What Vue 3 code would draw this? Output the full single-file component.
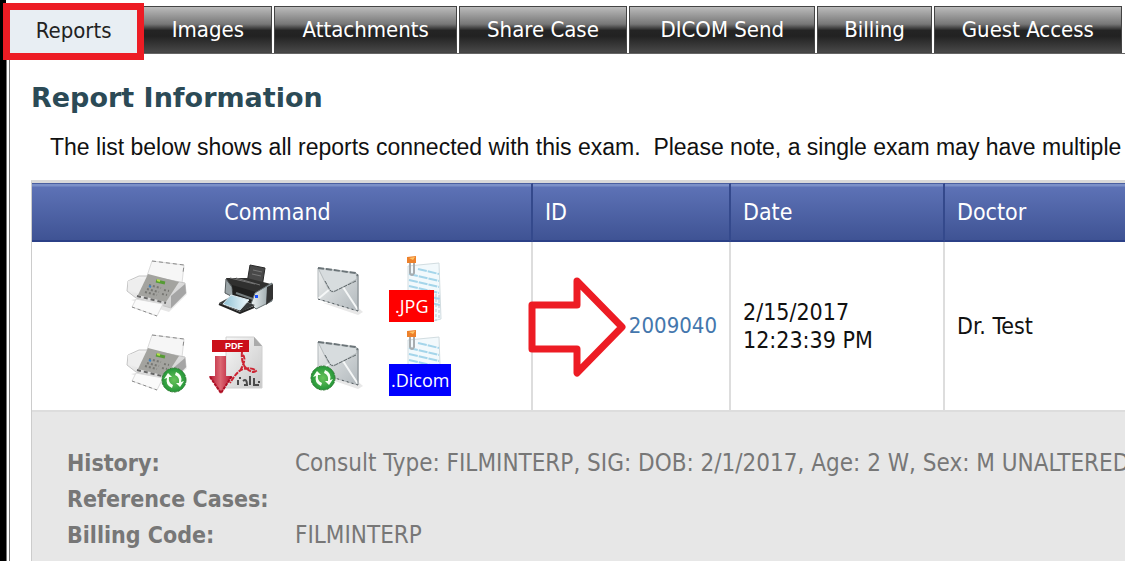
<template>
  <div class="page">
    <nav class="tabs">
      <button
        v-for="tab in tabs"
        :key="tab"
        type="button"
        class="tab"
        :class="{ active: tab === activeTab }"
        @click="activeTab = tab"
      >{{ tab }}</button>
    </nav>

    <main class="content">
      <h1>Report Information</h1>
      <p class="intro">The list below shows all reports connected with this exam.&nbsp; Please note, a single exam may have multiple</p>

      <table class="reports">
        <colgroup>
          <col class="col-command">
          <col class="col-id">
          <col class="col-date">
          <col>
        </colgroup>
        <thead>
          <tr>
            <th class="center">Command</th>
            <th>ID</th>
            <th>Date</th>
            <th>Doctor</th>
          </tr>
        </thead>
        <tbody>
          <tr v-for="report in reports" :key="report.id" class="report">
            <td class="commands-cell">
              <div class="commands">
                <button v-for="cmd in commands" :key="cmd.label" type="button" class="command" :aria-label="cmd.label">
                  <svg viewBox="0 0 64 66" width="64" height="66" aria-hidden="true">
                    <!-- fax -->
                    <g v-if="cmd.icon === 'fax'">
                      <path d="M6 44L44 56L62 38L59 33Z" fill="#e6e6e6" />
                      <path d="M27 5L59 9L57 27L22 20Z" fill="#f6f6f6" stroke="#dcdcdc" />
                      <path d="M27 5L59 9L58 17" fill="none" stroke="#8a8a8a" stroke-dasharray="4 3" />
                      <path d="M3 25L14 20L24 20L60 27L61 37L46 52L11 42L2 35Z" fill="url(#faxBody)" stroke="#c5c5c5" />
                      <path d="M46 40L60 28L61 37L46 52Z" fill="#a5a5a5" />
                      <path d="M3 25L14 22L22 25L14 38L3 34Z" fill="#eee" />
                      <path d="M23 18L54 26L41 46L13 39Z" fill="#a3a39f" />
                      <path d="M24 29L36 32M22 33L34 36M20 36L32 39M39 34L44 35M37 38L42 39" stroke="#777773" stroke-width="2" stroke-dasharray="2 2" />
                      <path d="M31 25L40 27" stroke="#569b35" stroke-width="3" />
                      <path d="M32 24L35 25" stroke="#b5e34a" stroke-width="2" />
                      <path d="M24 30L26 31" stroke="#4184c2" stroke-width="2" />
                      <path d="M12 40L41 47" stroke="#666" stroke-width="2" stroke-dasharray="4 3" />
                      <path d="M11 43L38 48L32 60L7 51Z" fill="#fafafa" stroke="#dcdcdc" />
                      <path d="M7 51L32 60" stroke="#8b8b8b" stroke-dasharray="3 3" />
                    </g>

                    <!-- printer -->
                    <g v-if="cmd.icon === 'printer'">
                      <path d="M37 9L52 12L49 31L34 27Z" fill="#494949" stroke="#292929" />
                      <path d="M40 14L49 16M39 18L48 20" stroke="#777" />
                      <path d="M13 22L34 22L58 28L45 37L16 32Z" fill="#30302f" />
                      <path d="M17 22L42 28M23 22L47 29" stroke="#747474" />
                      <path d="M13 23L19 31L20 41L12 37Z" fill="#9aa4a7" stroke="#53595b" />
                      <path d="M19 29L43 36L42 49L20 41Z" fill="#20201f" />
                      <path d="M23 37L40 43" stroke="#737b7c" stroke-width="2" />
                      <path d="M42 37L59 27L59 45L43 53L38 48Z" fill="url(#printerSide)" stroke="#697375" />
                      <path d="M54 31L60 28L60 43L53 49Z" fill="#333" />
                      <rect x="42" y="39" width="3" height="3" fill="#174fff" />
                      <path d="M6 47L17 41L42 49L28 56Z" fill="#373a3b" />
                      <path d="M18 39L36 44L27 54L10 48Z" fill="url(#photo)" stroke="#dceaf0" />
                      <path d="M6 48L27 57L41 51" stroke="#222" stroke-width="2" fill="none" />
                    </g>

                    <!-- envelope -->
                    <g v-if="cmd.icon === 'mail'">
                      <path d="M22 47L57 59L62 56L55 50Z" fill="#e8e8e8" />
                      <path d="M17 12L55 17L57 20L57 55L17 43Z" fill="url(#envelope)" stroke="#b2b8bb" />
                      <path d="M17 43L29 33M57 54L42 31" stroke="#f5f7f7" stroke-width="2" />
                      <path d="M17 12L55 17L56 23L35 35Q30 38 27 32Z" fill="#d7dcde" stroke="#b4babc" />
                      <path d="M17 12L55 17L57 20" stroke="#6b7478" stroke-width="2" stroke-dasharray="6 2" fill="none" />
                      <path d="M24 25L29 34Q31 37 36 34L55 25" stroke="#60686b" stroke-width="1" stroke-dasharray="4 1" fill="none" />
                      <path d="M57 20V55" stroke="#828a8e" />
                      <path d="M17 43L57 55" stroke="#4e565a" stroke-dasharray="2 3" />
                    </g>

                    <!-- pdf download -->
                    <g v-if="cmd.icon === 'pdf'">
                      <path d="M13 7H41L49 16V58H13Z" fill="url(#pdfPage)" stroke="#d0d0d0" />
                      <path d="M41 7V16H49Z" fill="#aaa" />
                      <path d="M29 22Q28 31 32 37Q39 44 43 41Q40 37 30 39Q24 41 17 53M30 25Q34 29 27 41" fill="none" stroke="#cd2533" stroke-width="2" stroke-dasharray="5 1" />
                      <path d="M26 48H28M25 50V55M30 51Q34 48 34 55H31M37 46V55M41 48V55H46M46 51V53" stroke="#4b4b4b" stroke-width="2" fill="none" />
                      <rect x="-1" y="10" width="37" height="12" fill="#cb101a" />
                      <text x="12" y="19" class="pdf-text">PDF</text>
                      <path d="M2 26H13V46H19L8 64L-4 46H2Z" fill="url(#downArrow)" />
                      <path d="M-3 47L8 63L19 46" fill="none" stroke="#ad1025" stroke-width="2" stroke-dasharray="3 1" />
                    </g>

                    <!-- clipped sheet -->
                    <g v-if="cmd.icon === 'sheet'">
                      <path d="M19 10L50 7L52 63L44 65L19 60Z" fill="#f2f9fc" stroke="#d2dde1" />
                      <path d="M29 13L50 18M20 18L50 25M20 24L50 31M20 30L50 37M42 41L51 43M42 47L51 49" stroke="#a4d5ea" stroke-width="2" stroke-dasharray="9 1" />
                      <path d="M47 38V65M50 39V62" stroke="#b8c7cf" stroke-dasharray="3 2" />
                      <path d="M21 6V17Q23 21 25 17V7" stroke="#a8adb0" stroke-width="2" fill="none" />
                      <path d="M18 1L27 0V7H18Z" fill="#ed812b" />
                      <path d="M20 2L26 1L24 4Z" fill="#ffc467" />
                    </g>

                    <!-- green refresh ball -->
                    <g v-if="cmd.refresh" :transform="cmd.icon === 'fax' ? 'translate(49 50)' : 'translate(22 48)'">
                      <circle r="12" fill="url(#refresh)" stroke="#397d39" stroke-dasharray="3 1" />
                      <path d="M-2 8Q-9 5 -7 -2L-10 -1L-6 -7L-2 -3L-5 -3Q-6 3 -1 5ZM2 -8Q9 -5 7 2L10 1L6 7L2 3L5 3Q6 -3 1 -5Z" fill="#f7fff4" />
                    </g>
                  </svg>
                  <span v-if="cmd.badge" class="badge" :class="cmd.color">{{ cmd.badge }}</span>
                </button>
              </div>
            </td>
            <td class="id-cell">
              <svg class="pointer" viewBox="0 0 98 102" width="98" height="102" aria-hidden="true">
                <path d="M4 28H49V4L94 50L49 96V72H4Z" fill="#fff" stroke="#ed1c24" stroke-width="7" stroke-linejoin="round" />
              </svg>
              <a href="#">{{ report.id }}</a>
            </td>
            <td>{{ report.date }}<br>{{ report.time }}</td>
            <td>{{ report.doctor }}</td>
          </tr>
          <tr class="details-row">
            <td colspan="4">
              <dl class="details">
                <template v-for="item in details" :key="item.name">
                  <dt>{{ item.name }}</dt>
                  <dd>{{ item.value }}</dd>
                </template>
              </dl>
            </td>
          </tr>
        </tbody>
      </table>
    </main>

    <!-- shared gradients -->
    <svg class="defs" width="0" height="0" aria-hidden="true">
      <defs>
        <linearGradient id="faxBody" x2="1" y2="1">
          <stop offset="0" stop-color="#fafafa" />
          <stop offset="1" stop-color="#c5c5c5" />
        </linearGradient>
        <linearGradient id="printerSide">
          <stop offset="0" stop-color="#edf3f4" />
          <stop offset="1" stop-color="#8d9a9e" />
        </linearGradient>
        <linearGradient id="photo">
          <stop offset="0" stop-color="#8fc0d3" />
          <stop offset="1" stop-color="#f2fbff" />
        </linearGradient>
        <linearGradient id="envelope" x2="1" y2="1">
          <stop offset="0" stop-color="#eceeee" />
          <stop offset="1" stop-color="#b2b9bd" />
        </linearGradient>
        <linearGradient id="pdfPage" x2="1" y2="1">
          <stop offset="0" stop-color="#f7f7f7" />
          <stop offset="1" stop-color="#c8c8c8" />
        </linearGradient>
        <linearGradient id="downArrow">
          <stop offset="0" stop-color="#b51530" />
          <stop offset="0.5" stop-color="#dc6873" />
          <stop offset="1" stop-color="#b51530" />
        </linearGradient>
        <radialGradient id="refresh">
          <stop offset="0" stop-color="#67c359" />
          <stop offset="1" stop-color="#249638" />
        </radialGradient>
      </defs>
    </svg>
  </div>
</template>

<script setup>
import { ref } from 'vue';

const tabs = ['Reports', 'Images', 'Attachments', 'Share Case', 'DICOM Send', 'Billing', 'Guest Access'];
const activeTab = ref('Reports');

const commands = [
  { label: 'Fax', icon: 'fax' },
  { label: 'Print', icon: 'printer' },
  { label: 'Email', icon: 'mail' },
  { label: 'Save as JPG', icon: 'sheet', badge: '.JPG', color: 'red' },
  { label: 'Resend fax', icon: 'fax', refresh: true },
  { label: 'Download PDF', icon: 'pdf' },
  { label: 'Resend email', icon: 'mail', refresh: true },
  { label: 'Save as Dicom', icon: 'sheet', badge: '.Dicom', color: 'blue' },
];

const reports = ref([
  { id: '2009040', date: '2/15/2017', time: '12:23:39 PM', doctor: 'Dr. Test' },
]);

const details = ref([
  { name: 'History:', value: 'Consult Type: FILMINTERP, SIG: DOB: 2/1/2017, Age: 2 W, Sex: M UNALTERED,' },
  { name: 'Reference Cases:', value: '' },
  { name: 'Billing Code:', value: 'FILMINTERP' },
]);
</script>

<style>
body {
  margin: 0;
  background: #fff;
}
</style>

<style scoped>
.page {
  box-sizing: border-box;
  min-height: 100vh;
  padding-top: 6px;
  border-left: 6px solid #000;
  font-family: Tahoma, "DejaVu Sans Condensed", "Noto Sans", sans-serif;
  font-size: 23px;
  color: #111;
}

/* tabs */
.tabs {
  display: grid;
  grid-template-columns: 135fr 129fr 182fr 168fr 186fr 114fr 188fr;
  column-gap: 2px;
  height: 47px;
  padding-right: 3px;
  border-bottom: 1px solid #666;
}

.tab {
  height: 47px;
  padding: 0;
  border: 1px solid #444;
  background: linear-gradient(#bbb 0%, #777 38%, #242424 52%, #222 65%, #484848 100%);
  color: #fff;
  font: inherit;
  font-size: 22px;
  white-space: nowrap;
  cursor: pointer;
}

.tab.active {
  position: relative;
  height: 51px;
  padding-bottom: 2px;
  border: 0;
  background: #e8eef3;
  color: #222;
  outline: 7px solid #ed1c24;
  outline-offset: -4px;
}

/* content */
.content {
  padding: 26px 0 0 21px;
  border-left: 4px double #777;
  overflow: hidden;
}

h1 {
  margin: 0;
  color: #2b4a56;
  font-family: "Arial Black", "DejaVu Sans", sans-serif;
  font-size: 27px;
  font-weight: 900;
  line-height: 36px;
}

.intro {
  margin: 16px 0 18px 19px;
  font-family: "Liberation Sans", Arial, sans-serif;
  line-height: 30px;
  white-space: nowrap;
}

.reports {
  width: 100%;
  table-layout: fixed;
  border-collapse: separate;
  border-spacing: 0;
  border-top: 3px solid #d9d9d9;
  border-left: 1px solid #ccc;
}

.col-command {
  width: 501px;
}

.col-id {
  width: 198px;
}

.col-date {
  width: 214px;
}

th {
  box-sizing: border-box;
  height: 59px;
  padding: 0 12px;
  border-top: 1px solid #4a5fa0;
  border-right: 2px solid #34498c;
  border-bottom: 2px solid #2b4087;
  background: linear-gradient(#7b90c8 0 2px, #5d72b6 3px, #3f5394);
  color: #fff;
  font-weight: normal;
  text-align: left;
}

th.center {
  padding-right: 20px;
  text-align: center;
}

.report td {
  padding: 0 12px;
  border-right: 2px solid #ddd;
  border-bottom: 2px solid #ddd;
  line-height: 28px;
}

th:last-child,
.report td:last-child {
  border-right: 0;
}

.report td.commands-cell {
  padding: 14px 0 14px 93px;
}

.commands {
  display: grid;
  grid-template-columns: repeat(4, 64px);
  gap: 8px 24px;
}

.command {
  position: relative;
  height: 66px;
  padding: 0;
  border: 0;
  background: none;
  cursor: pointer;
}

.command svg {
  display: block;
  overflow: visible;
}

.pdf-text {
  fill: #fff;
  font: bold 9px "Liberation Sans", sans-serif;
}

.badge {
  position: absolute;
  left: 0;
  bottom: 0;
  color: #fff;
  font-family: "Open Sans", "Noto Sans", sans-serif;
  font-size: 18px;
  line-height: 32px;
}

.badge.red {
  padding: 0 6px;
  background: #f00;
}

.badge.blue {
  padding: 0 2px;
  background: #00f;
}

.report td.id-cell {
  position: relative;
  font-size: 22px;
  text-align: right;
}

.id-cell a {
  color: #4477ad;
  text-decoration: none;
}

.pointer {
  position: absolute;
  top: 35px;
  left: -5px;
}

/* details */
.details-row td {
  padding: 33px 0 9px 35px;
  background: #e7e7e7;
}

.details {
  display: grid;
  grid-template-columns: 228px 1fr;
  grid-auto-rows: 36px;
  margin: 0;
  color: #777;
  line-height: 36px;
  white-space: nowrap;
}

dt {
  font-weight: bold;
}

dd {
  margin: 0;
  font-size: 24px;
}

.defs {
  position: absolute;
}
</style>
